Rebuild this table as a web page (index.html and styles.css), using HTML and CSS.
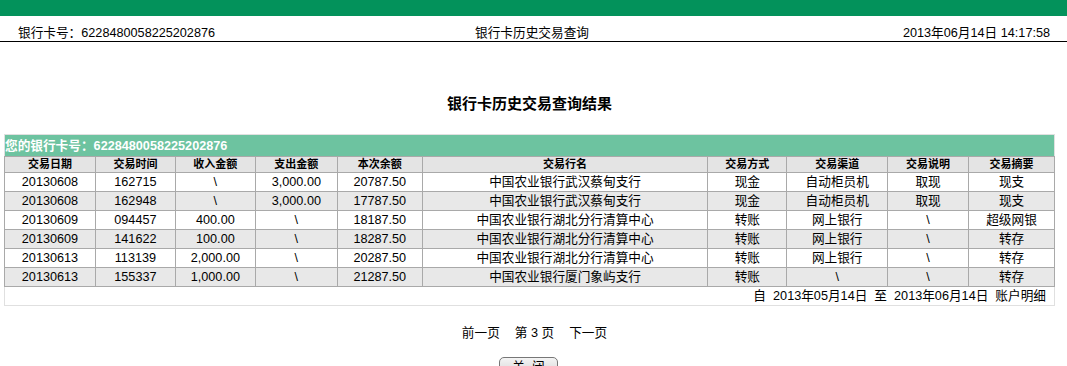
FILE: index.html
```html
<!DOCTYPE html>
<html lang="zh">
<head>
<meta charset="utf-8">
<title>银行卡历史交易查询</title>
<link rel="stylesheet" href="styles.css">
</head>
<body>
<div class="topbar"></div>
<div class="header">
  <span class="h-left">银行卡号：6228480058225202876</span>
  <span class="h-center">银行卡历史交易查询</span>
  <span class="h-right">2013年06月14日 14:17:58</span>
</div>
<h1 class="title">银行卡历史交易查询结果</h1>
<div class="wrap">
<table class="tx">
  <tr class="cardrow"><td colspan="10">您的银行卡号：6228480058225202876</td></tr>
  <tr class="head">
    <th class="c1">交易日期</th><th class="c2">交易时间</th><th class="c3">收入金额</th><th class="c4">支出金额</th><th class="c5">本次余额</th><th class="c6">交易行名</th><th class="c7">交易方式</th><th class="c8">交易渠道</th><th class="c9">交易说明</th><th class="c10">交易摘要</th>
  </tr>
  <tr><td>20130608</td><td>162715</td><td>\</td><td>3,000.00</td><td>20787.50</td><td>中国农业银行武汉蔡甸支行</td><td>现金</td><td>自动柜员机</td><td>取现</td><td>现支</td></tr>
  <tr class="alt"><td>20130608</td><td>162948</td><td>\</td><td>3,000.00</td><td>17787.50</td><td>中国农业银行武汉蔡甸支行</td><td>现金</td><td>自动柜员机</td><td>取现</td><td>现支</td></tr>
  <tr><td>20130609</td><td>094457</td><td>400.00</td><td>\</td><td>18187.50</td><td>中国农业银行湖北分行清算中心</td><td>转账</td><td>网上银行</td><td>\</td><td>超级网银</td></tr>
  <tr class="alt"><td>20130609</td><td>141622</td><td>100.00</td><td>\</td><td>18287.50</td><td>中国农业银行湖北分行清算中心</td><td>转账</td><td>网上银行</td><td>\</td><td>转存</td></tr>
  <tr><td>20130613</td><td>113139</td><td>2,000.00</td><td>\</td><td>20287.50</td><td>中国农业银行湖北分行清算中心</td><td>转账</td><td>网上银行</td><td>\</td><td>转存</td></tr>
  <tr class="alt"><td>20130613</td><td>155337</td><td>1,000.00</td><td>\</td><td>21287.50</td><td>中国农业银行厦门象屿支行</td><td>转账</td><td>\</td><td>\</td><td>转存</td></tr>
  <tr class="foot"><td colspan="10">自&nbsp; 2013年05月14日&nbsp; 至&nbsp; 2013年06月14日&nbsp; 账户明细</td></tr>
</table>
</div>
<div class="pager">
  <span>前一页</span><span>第&nbsp;3&nbsp;页</span><span>下一页</span>
</div>
<div class="actions">
  <button class="btn" type="button">关&nbsp;&nbsp;闭</button>
</div>
</body>
</html>
```
FILE: styles.css
```css
html, body {
  margin: 0;
  padding: 0;
  background: #fff;
  font-family: "Liberation Sans", Arial, "Noto Sans CJK SC", sans-serif;
  font-size: 9.5pt;
  color: #000;
}
.topbar {
  height: 16px;
  background: #03925b;
}
.header {
  display: flex;
  justify-content: space-between;
  align-items: flex-end;
  height: 26px;
  padding: 0 17px 1px 18px;
  border-bottom: 1px solid #000;
  box-sizing: border-box;
  line-height: 14px;
}
.h-left, .h-right, .h-center { flex: 1; }
.h-right { text-align: right; }
.h-center { text-align: center; padding-right: 4px; }
.title {
  margin: 0;
  padding-top: 52px;
  height: 92px;
  box-sizing: border-box;
  text-align: center;
  font-size: 15px;
  font-weight: bold;
  line-height: 19px;
  padding-right: 8px;
}
.wrap {
  padding: 0 12px 0 4px;
}
.tx {
  width: 1051px;
  border-collapse: collapse;
  border: 1px solid #e0e0e0;
}
.tx td, .tx th {
  border: 1px solid #a9a9a9;
  text-align: center;
  padding: 0;
  font-size: 9.5pt;
  height: 18px;
  line-height: 14px;
}
.tx .cardrow td {
  background: #6dc3a0;
  color: #fff;
  font-weight: bold;
  text-align: left;
  height: 21px;
  border: none;
}
.tx .head th {
  background: #e4e4e4;
  font-weight: bold;
  font-size: 11px;
  height: 15px;
  line-height: 13px;
}
.tx tr.alt td { background: #e8e8e8; }
.tx .foot td {
  text-align: right;
  border: 1px solid #e0e0e0;
  height: 18px;
  padding-right: 8px;
}
.c1 { width: 90px; }
.c2 { width: 79px; }
.c3 { width: 79px; }
.c4 { width: 81px; }
.c5 { width: 84px; }
.c6 { width: 285px; }
.c7 { width: 78px; }
.c8 { width: 100px; }
.c9 { width: 80px; }
.c10 { width: 85px; }
.pager {
  display: flex;
  justify-content: center;
  gap: 15px;
  margin-top: 20px;
  line-height: 14px;
  padding-left: 2px;
}
.actions {
  display: flex;
  justify-content: center;
  margin-top: 17px;
  padding-right: 10px;
}
.btn {
  font-family: "Liberation Sans", Arial, "Noto Sans CJK SC", sans-serif;
  font-size: 9.5pt;
  padding: 1px 12px;
  border: 1px solid #777;
  border-radius: 5px;
  background: linear-gradient(#f4f4f4, #d4d4d4);
  height: 20px;
  line-height: 16px;
}
```
